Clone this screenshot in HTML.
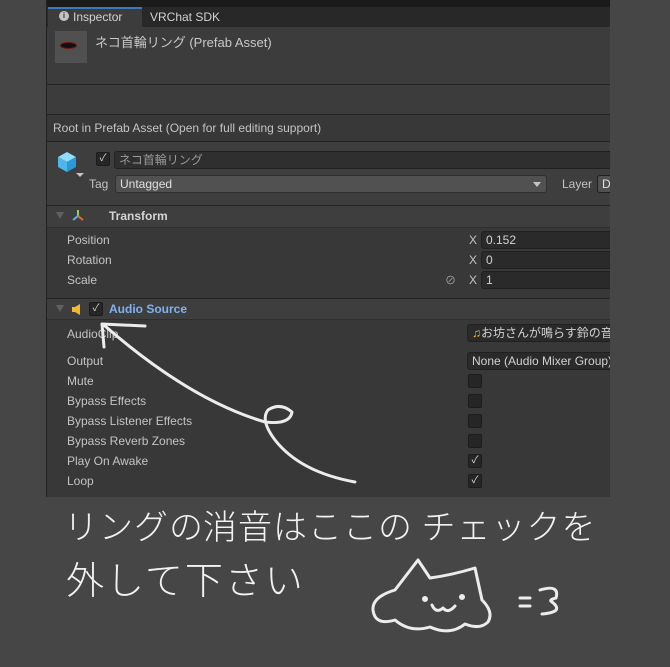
<!DOCTYPE html>
<html><head><meta charset="utf-8"><style>
*{margin:0;padding:0;box-sizing:border-box}
body{width:670px;height:667px;background:#464646;position:relative;overflow:hidden;font-family:"Liberation Sans","Noto Sans CJK JP",sans-serif;font-size:12px;color:#c4c4c4}
.a{position:absolute}
#panel{left:46px;top:0;width:564px;height:497px;background:#383838;border-left:1px solid #222;overflow:hidden}
.line{position:absolute;left:0;width:100%;height:1px;background:#232323}
.lbl{position:absolute;left:20px;font-size:12px;color:#c4c4c4}
.field{position:absolute;background:#2a2a2a;border:1px solid #202020;border-radius:3px;height:18px;color:#d2d2d2;padding-left:4px;line-height:16px;font-size:12px;white-space:nowrap;overflow:hidden}
.cb{position:absolute;width:14px;height:14px;background:#262626;border:1px solid #1c1c1c;border-radius:2px;color:#ddd;font-size:10px;line-height:12px;text-align:center}
.hand{position:absolute;color:#f2f2f2;font-family:"Noto Sans CJK JP",sans-serif;font-weight:300;white-space:nowrap}
</style></head><body>
<div id="panel" class="a">
  <div class="a" style="left:0;top:0;width:564px;height:7px;background:#1b1b1b"></div>
  <div class="a" style="left:0;top:7px;width:564px;height:20px;background:#282828"></div>
  <div class="a" style="left:1px;top:7px;width:94px;height:20px;background:#3c3c3c;border-top:2px solid #3a79bb"></div>
  <div class="a" style="left:12px;top:11px;width:10px;height:10px;border-radius:50%;background:#c4c4c4;color:#3c3c3c;font-size:8px;font-weight:bold;text-align:center;line-height:10px">i</div>
  <div class="a" style="left:26px;top:10px;color:#d2d2d2">Inspector</div>
  <div class="a" style="left:103px;top:10px;color:#d2d2d2">VRChat SDK</div>
  <div class="a" style="left:0;top:27px;width:564px;height:58px;background:#3c3c3c"></div>
  <div class="a" style="left:8px;top:31px;width:32px;height:32px;background:#505050"></div>
  <div class="a" style="left:13px;top:42px;width:17px;height:7px;border-radius:50%;background:#111;border:1px solid #7a1515"></div>
  <div class="a" style="left:48px;top:32px;font-size:13px;color:#c8c8c8">ネコ首輪リング (Prefab Asset)</div>
  <div class="line" style="top:84px"></div>
  <div class="a" style="left:0;top:85px;width:564px;height:30px;background:#3c3c3c"></div>
  <div class="line" style="top:114px"></div>
  <div class="a" style="left:6px;top:121px;color:#c4c4c4">Root in Prefab Asset (Open for full editing support)</div>
  <div class="line" style="top:141px"></div>
  <div class="a" style="left:0;top:142px;width:564px;height:63px;background:#3e3e3e"></div>
  <svg class="a" style="left:8px;top:150px" width="30" height="30" viewBox="0 0 30 30"><path d="M3 7 L12 2 L21 7 L12 12Z" fill="#8fdcff"/><path d="M3 7 L12 12 L12 22 L3 17Z" fill="#4fb6ea"/><path d="M21 7 L12 12 L12 22 L21 17Z" fill="#2a9ad6"/><path d="M21 23 L29 23 L25 27Z" fill="#c4c4c4"/></svg>
  <div class="cb" style="left:49px;top:152px">✓</div>
  <div class="field" style="left:67px;top:151px;width:510px;background:#2f2f2f;color:#999">ネコ首輪リング</div>
  <div class="a" style="left:42px;top:177px;color:#c4c4c4">Tag</div>
  <div class="field" style="left:68px;top:175px;width:432px;background:#515151;border-color:#303030;color:#e0e0e0">Untagged</div>
  <div class="a" style="left:486px;top:182px;width:0;height:0;border-left:4px solid transparent;border-right:4px solid transparent;border-top:5px solid #c4c4c4"></div>
  <div class="a" style="left:515px;top:177px;color:#c4c4c4">Layer</div>
  <div class="field" style="left:550px;top:175px;width:30px;background:#515151;color:#e0e0e0">D</div>
  <div class="line" style="top:205px"></div>
  <div class="a" style="left:0;top:206px;width:564px;height:21px;background:#3e3e3e"></div>
  <div class="a" style="left:9px;top:212px;border-left:4px solid transparent;border-right:4px solid transparent;border-top:7px solid #606060"></div>
  <svg class="a" style="left:24px;top:209px" width="14" height="14"><line x1="7" y1="7" x2="7" y2="1" stroke="#8ccf5a" stroke-width="2"/><line x1="7" y1="7" x2="2" y2="11" stroke="#4fb6ea" stroke-width="2"/><line x1="7" y1="7" x2="12" y2="11" stroke="#e0663d" stroke-width="2"/></svg>
  <div class="a" style="left:62px;top:209px;font-weight:bold;color:#d4d4d4">Transform</div>
  <div class="line" style="top:227px;background:#2e2e2e"></div>
  <div class="lbl" style="top:233px">Position</div>
  <div class="lbl" style="top:253px">Rotation</div>
  <div class="lbl" style="top:273px">Scale</div>
  <div class="a" style="left:422px;top:233px">X</div>
  <div class="a" style="left:422px;top:253px">X</div>
  <div class="a" style="left:422px;top:273px">X</div>
  <div class="a" style="left:398px;top:272px;font-size:11px;color:#aaa">⊘</div>
  <div class="field" style="left:434px;top:231px;width:150px">0.152</div>
  <div class="field" style="left:434px;top:251px;width:150px">0</div>
  <div class="field" style="left:434px;top:271px;width:150px">1</div>
  <div class="line" style="top:298px"></div>
  <div class="a" style="left:0;top:299px;width:564px;height:20px;background:#3e3e3e"></div>
  <div class="a" style="left:9px;top:305px;border-left:4px solid transparent;border-right:4px solid transparent;border-top:7px solid #606060"></div>
  <svg class="a" style="left:24px;top:303px" width="12" height="13"><path d="M1 4 H4 L9 1 V12 L4 9 H1Z" fill="#f4b82a"/></svg>
  <div class="cb" style="left:42px;top:302px">✓</div>
  <div class="a" style="left:62px;top:302px;font-weight:bold;color:#7fb2ef">Audio Source</div>
  <div class="line" style="top:319px;background:#2e2e2e"></div>
  <div class="lbl" style="top:327px">AudioClip</div>
  <div class="field" style="left:420px;top:324px;width:160px;background:#2a2a2a;color:#d2d2d2"><span style="color:#f4b82a">♫</span>お坊さんが鳴らす鈴の音</div>
  <div class="lbl" style="top:354px">Output</div>
  <div class="field" style="left:420px;top:352px;width:160px;background:#2a2a2a">None (Audio Mixer Group)</div>
  <div class="lbl" style="top:374px">Mute</div>
  <div class="lbl" style="top:394px">Bypass Effects</div>
  <div class="lbl" style="top:414px">Bypass Listener Effects</div>
  <div class="lbl" style="top:434px">Bypass Reverb Zones</div>
  <div class="lbl" style="top:454px">Play On Awake</div>
  <div class="lbl" style="top:474px">Loop</div>
  <div class="cb" style="left:421px;top:374px"></div>
  <div class="cb" style="left:421px;top:394px"></div>
  <div class="cb" style="left:421px;top:414px"></div>
  <div class="cb" style="left:421px;top:434px"></div>
  <div class="cb" style="left:421px;top:454px">✓</div>
  <div class="cb" style="left:421px;top:474px">✓</div>
</div>
<svg class="a" style="left:0;top:0" width="670" height="667" fill="none" stroke="#ececec" stroke-width="3" stroke-linecap="round" stroke-linejoin="round">
  <path d="M355 482 Q300 472 275 440 Q260 420 268 410 Q280 402 292 412 Q290 425 265 422 Q190 400 105 326"/>
  <path d="M102 324 L145 326 M102 324 L104 347"/>
  <path d="M395 590 L418 560 L430 578 Q452 575 475 568 L482 600 Q494 612 488 622 Q480 630 465 624 Q450 636 430 627 Q410 633 395 620 Q375 626 373 610 Q372 597 395 590 Z"/>
  <circle cx="425" cy="599" r="1.5"/><circle cx="462" cy="597" r="1.5"/>
  <path d="M432 605 Q436 614 443 608 Q448 614 455 606"/>
  <path d="M520 598 H530 M520 606 H530 M540 590 Q560 584 556 598 Q548 600 552 602 Q565 612 542 614"/>
</svg>
<div class="hand" style="left:64px;top:500px;font-size:34px;letter-spacing:1px">リング<span style="letter-spacing:0">の</span>消音はここの チェックを</div>
<div class="hand" style="left:66px;top:550px;font-size:38px;letter-spacing:2px">外して下さい</div>
</body></html>
